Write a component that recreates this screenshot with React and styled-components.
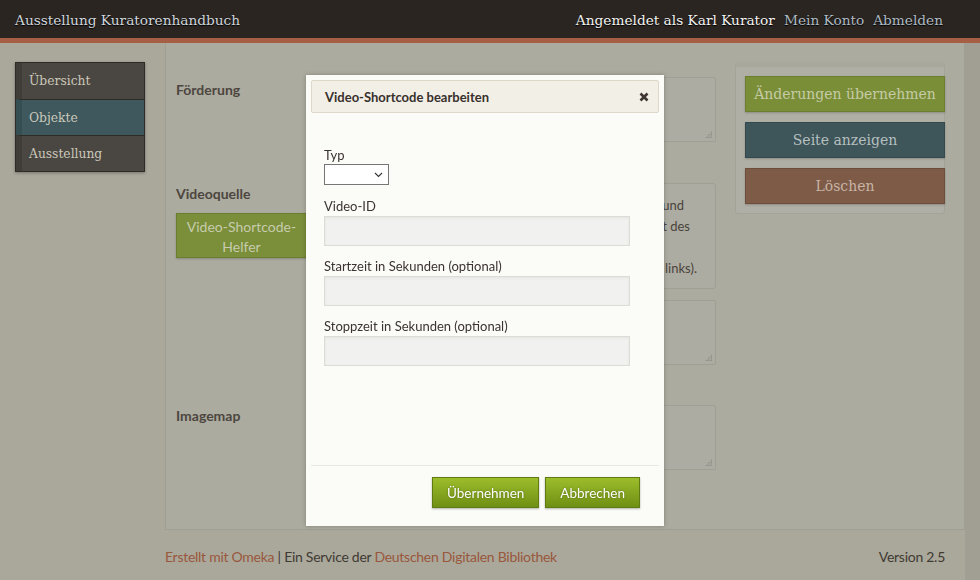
import React from "react";
import styled, { createGlobalStyle } from "styled-components";

const Global = createGlobalStyle`
  html, body { margin: 0; padding: 0; }
  body {
    width: 980px; height: 580px; overflow: hidden;
    background: #a8a69a;
    font-family: Lato, "Open Sans", sans-serif;
  }
  * { box-sizing: border-box; }
`;

const slab = `"DejaVu Serif", "Liberation Serif", serif`;

const Page = styled.div`
  width: 980px; height: 580px; display: flex; flex-direction: column;
  background: linear-gradient(90deg, #aaa89b 0, #aaa89b 965px, #a19f93 965px);
`;

const Header = styled.header`
  height: 43px; flex: none; background: #2b2521; border-bottom: 5px solid #a65e45;
  display: flex; align-items: center; justify-content: space-between; padding: 1px 37px 0 15px;
  font-family: ${slab}; font-size: 13.7px;
`;
const SiteTitle = styled.div` color: #cfd6dc; text-shadow: 0 1px 1px #000; `;
const UserNav = styled.nav` display: flex; gap: 9px; `;
const UserItem = styled.span`
  color: ${p => (p.$strong ? "#f4f4f2" : "#aebbc4")};
  text-shadow: 0 1px 1px #000;
`;

const Main = styled.div` flex: 1; display: flex; `;

const Sidebar = styled.aside` width: 165px; padding: 19px 0 0 15px; `;
const NavList = styled.ul`
  list-style: none; margin: 0; padding: 0; width: 130px;
  border: 1px solid #2e2b27; box-shadow: 0 1px 3px rgba(0,0,0,0.3);
`;
const NavItem = styled.li`
  height: 36px; display: flex; align-items: center; padding-left: 7px;
  font-family: ${slab}; font-size: 12.3px; color: #cbc8ba;
  background: ${p => (p.$active ? "#3e585d" : "#4a4641")};
  border-left: 6px solid ${p => (p.$active ? "#354e52" : "#403c38")};
  & + & { border-top: 1px solid #2e2b27; }
`;

const ContentCol = styled.div` width: 800px; display: flex; flex-direction: column; `;

const Panel = styled.section`
  height: 487px; background: #abab9f; border: 1px solid #a09f94; border-top: none;
  display: flex; padding: 19px 20px 0 10px; gap: 19px;
`;

const Form = styled.div` width: 540px; flex: none; display: flex; flex-direction: column; `;

const FieldRow = styled.div`
  display: flex; margin-top: ${p => p.$mt || 0}px;
`;
const Label = styled.div`
  width: 145px; flex: none; padding-top: ${p => p.$pt || 0}px;
  font-size: 14px; font-weight: 700; color: #4d463f;
`;
const Inputs = styled.div` flex: 1; min-width: 0; display: flex; flex-direction: column; gap: 11px; `;
const TextArea = styled.div`
  position: relative; height: 65px; background: #adaca2; border: 1px solid #a09f95; border-radius: 2px;
  &::after {
    content: ""; position: absolute; right: 3px; bottom: 3px; width: 7px; height: 7px;
    background: radial-gradient(circle, #8f8e85 0.8px, transparent 1px) 0 0 / 2.5px 2.5px;
    clip-path: polygon(100% 0, 100% 100%, 0 100%);
  }
`;
const HelpBox = styled.div`
  height: 106px; background: #adaca2; border: 1px solid #a09f95; border-radius: 3px; overflow: hidden;
  padding: 11px 8px 0 12px; font-size: 13px; line-height: 21px; color: #4a433c; white-space: nowrap;
  display: flex; flex-direction: column; align-items: flex-end;
`;
const HelpLine = styled.span` padding-right: ${p => p.$pr || 0}px; `;
const HelperButton = styled.div`
  margin-top: 11px; width: 131px; height: 45px; background: #7b8e3a; border: 1px solid #6b7d2f;
  color: #c6ccad; font-size: 14px; text-align: center; line-height: 20px; padding-top: 3px;
  box-shadow: 0 1px 2px rgba(0,0,0,0.2);
`;
const LabelCol = styled.div` width: 145px; flex: none; `;

const Actions = styled.div`
  width: 210px; height: 152px; align-self: flex-start;
  background: #b0afa5; border: 1px solid #a4a399; border-top: 5px solid #a9a89d; border-radius: 3px;
  padding: 9px 0 0 9px; display: flex; flex-direction: column; gap: 10px;
`;
const ActionButton = styled.div`
  width: 200px; height: 36px; display: flex; align-items: center; justify-content: center;
  font-family: ${slab}; font-size: 14px;
  background: ${p => p.$bg}; color: ${p => p.$fg}; border: 1px solid ${p => p.$bd};
  box-shadow: 0 1px 2px rgba(0,0,0,0.2);
`;

const Footer = styled.footer`
  flex: 1; display: flex; justify-content: space-between; align-items: center;
  padding: 2px 20px 0 0; font-size: 14px; letter-spacing: -0.27px; color: #403a33;
`;
const FLink = styled.span` color: #99573c; `;

const Modal = styled.div`
  position: fixed; left: 306px; top: 75px; width: 358px; height: 451px;
  background: #fbfbf8; box-shadow: 0 0 4px rgba(0,0,0,0.25); padding: 5px;
  display: flex; flex-direction: column;
`;
const ModalHead = styled.div`
  height: 33px; flex: none; background: #f2efe7; border: 1px solid #ddd8c9; border-radius: 2px;
  display: flex; align-items: center; justify-content: space-between; padding: 0 9px 0 13px;
  font-size: 13px; font-weight: 700; color: #38302c;
`;
const ModalBody = styled.div`
  flex: 1; padding: 34px 29px 0 13px; display: flex; flex-direction: column;
`;
const MLabel = styled.label`
  display: block; font-size: 13px; color: #3b332e; line-height: 17px; margin-top: ${p => p.$mt || 0}px;
`;
const Select = styled.div`
  width: 65px; height: 21px; background: #fff; border: 1px solid #767676;
  display: flex; align-items: center; justify-content: flex-end; padding-right: 5px;
`;
const TextInput = styled.div`
  height: 30px; background: #f1f1ef; border: 1px solid #dcdcd7;
  box-shadow: inset 0 1px 3px rgba(0,0,0,0.06); margin-top: 1px;
`;
const ModalFoot = styled.div`
  height: 56px; flex: none; border-top: 1px solid #e8e8e4;
  display: flex; justify-content: flex-end; align-items: flex-start; gap: 6px; padding: 11px 19px 0 0;
`;
const GreenButton = styled.div`
  height: 31px; padding: 0 14px; display: flex; align-items: center;
  background: linear-gradient(#9dbd2c, #6f8f14); border: 1px solid #5f7c12;
  color: #fff; font-size: 13.5px; text-shadow: 0 0 2px rgba(0,0,0,0.35);
  box-shadow: 0 1px 2px rgba(0,0,0,0.3);
`;

const Chevron = () => (
  <svg width="9" height="6" viewBox="0 0 9 6"><path d="M1 1l3.5 3.5L8 1" fill="none" stroke="#333" strokeWidth="1.1" /></svg>
);
const CloseIcon = () => (
  <svg width="10" height="10" viewBox="0 0 10 10"><path d="M1.5 1.5l7 7M8.5 1.5l-7 7" stroke="#3e3431" strokeWidth="2.6" /></svg>
);

export default function App() {
  return (
    <>
      <Global />
      <Page>
        <Header>
          <SiteTitle>Ausstellung Kuratorenhandbuch</SiteTitle>
          <UserNav>
            <UserItem $strong>Angemeldet als Karl Kurator</UserItem>
            <UserItem>Mein Konto</UserItem>
            <UserItem>Abmelden</UserItem>
          </UserNav>
        </Header>
        <Main>
          <Sidebar>
            <NavList>
              <NavItem>Übersicht</NavItem>
              <NavItem $active>Objekte</NavItem>
              <NavItem>Ausstellung</NavItem>
            </NavList>
          </Sidebar>
          <ContentCol>
            <Panel>
              <Form>
                <FieldRow $mt={15}>
                  <Label $pt={4}>Förderung</Label>
                  <Inputs><TextArea /></Inputs>
                </FieldRow>
                <FieldRow $mt={41}>
                  <LabelCol>
                    <Label $pt={2}>Videoquelle</Label>
                    <HelperButton>Video-Shortcode-<br />Helfer</HelperButton>
                  </LabelCol>
                  <Inputs>
                    <HelpBox>
                      <HelpLine $pr={23}>Geben Sie die Videoquelle ein oder nutzen Sie den Helfer und</HelpLine>
                      <HelpLine $pr={17}>erzeugen Sie den Shortcode mit dem Assistenten anstatt des</HelpLine>
                      <HelpLine>&nbsp;</HelpLine>
                      <HelpLine $pr={10}>Eingabefeldes (Button Video-Shortcode-Helfer links).</HelpLine>
                    </HelpBox>
                    <TextArea />
                  </Inputs>
                </FieldRow>
                <FieldRow $mt={40}>
                  <Label $pt={2}>Imagemap</Label>
                  <Inputs><TextArea /></Inputs>
                </FieldRow>
              </Form>
              <Actions>
                <ActionButton $bg="#7a8e37" $fg="#c5cba6" $bd="#6c7e2f">Änderungen übernehmen</ActionButton>
                <ActionButton $bg="#3e555a" $fg="#b5bfbf" $bd="#34494d">Seite anzeigen</ActionButton>
                <ActionButton $bg="#7d5b47" $fg="#c8b4a6" $bd="#6d4e3c">Löschen</ActionButton>
              </Actions>
            </Panel>
            <Footer>
              <span><FLink>Erstellt mit Omeka</FLink> | Ein Service der <FLink>Deutschen Digitalen Bibliothek</FLink></span>
              <span>Version 2.5</span>
            </Footer>
          </ContentCol>
        </Main>
        <Modal role="dialog">
          <ModalHead>
            <span>Video-Shortcode bearbeiten</span>
            <CloseIcon />
          </ModalHead>
          <ModalBody>
            <MLabel>Typ</MLabel>
            <Select><Chevron /></Select>
            <MLabel $mt={13}>Video-ID</MLabel>
            <TextInput />
            <MLabel $mt={12}>Startzeit in Sekunden (optional)</MLabel>
            <TextInput />
            <MLabel $mt={12}>Stoppzeit in Sekunden (optional)</MLabel>
            <TextInput />
          </ModalBody>
          <ModalFoot>
            <GreenButton>Übernehmen</GreenButton>
            <GreenButton>Abbrechen</GreenButton>
          </ModalFoot>
        </Modal>
      </Page>
    </>
  );
}
